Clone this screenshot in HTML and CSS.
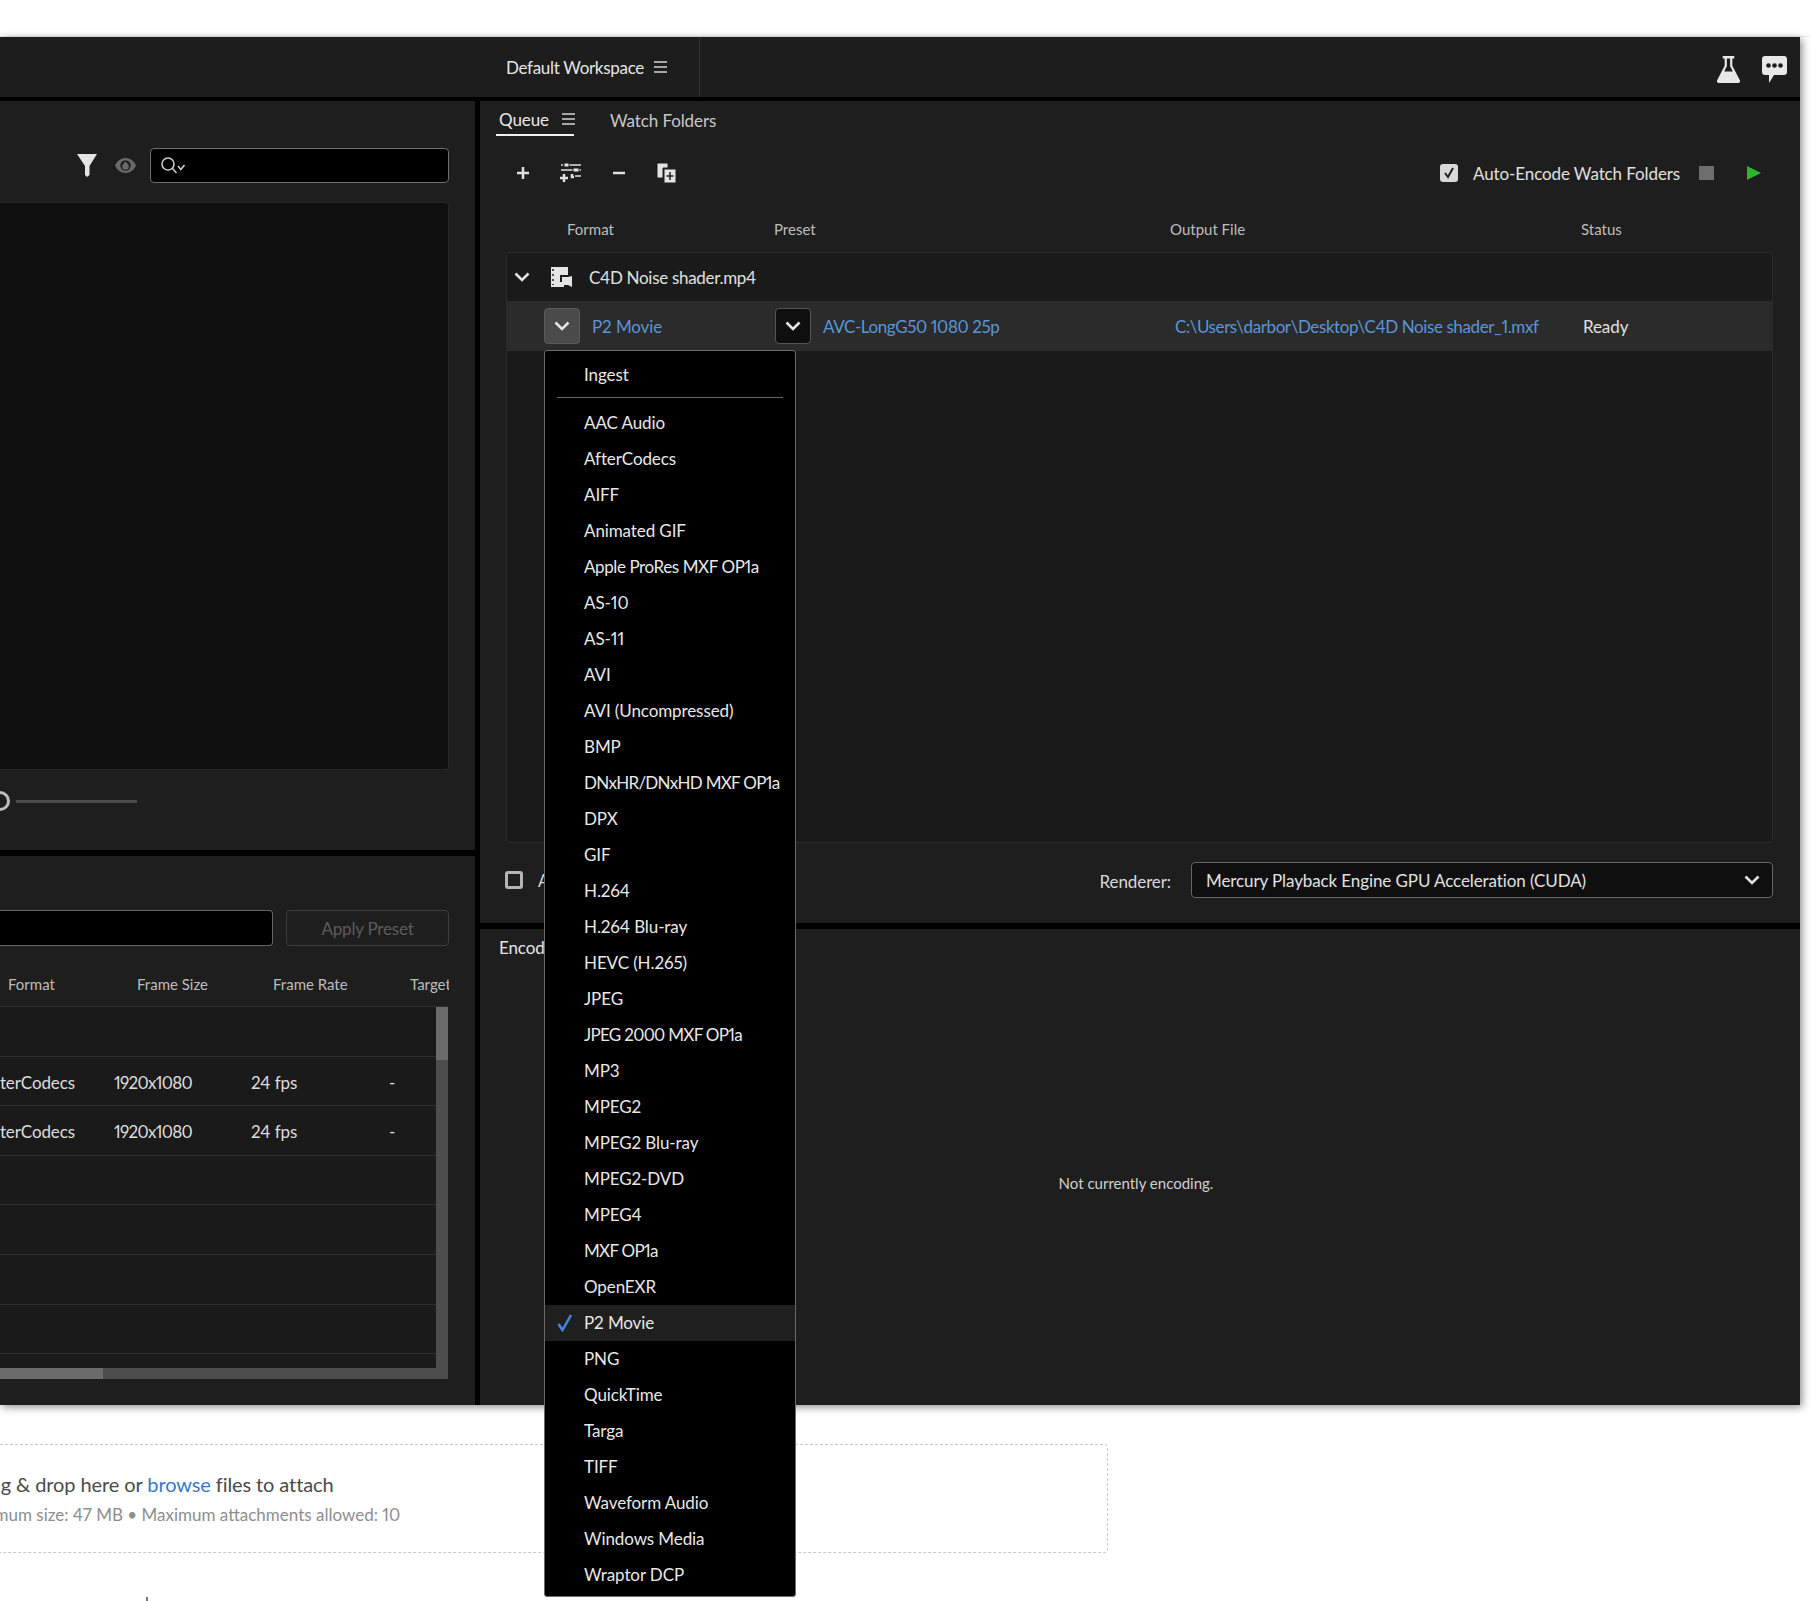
FILE: index.html
```html
<!DOCTYPE html>
<html lang="en">
<head>
  <meta charset="UTF-8" />
  <title>Media Encoder Queue</title>
  <link rel="stylesheet" href="styles.css">
</head>
<body>
  <div class="top-strip"></div>

  <div class="window">
    <div class="appbar">
      <div class="workspace">
        <span class="workspace-name">Default Workspace</span>
        <svg class="menu-icon" viewBox="0 0 13 12"><path d="M0 1h13M0 6h13M0 11h13" /></svg>
      </div>
      <div class="appbar-icons">
        <svg class="flask" viewBox="0 0 24 28"><path d="M6 0h12v2.500h-2V10l8 15.500c.6 1.300-.2 2.500-1.600 2.500H1.600C.2 28-.6 26.800 0 25.500L8 10V2.500H6z M10.300 2.500v8L7.500 16h9l-2.800-5.500v-8z" fill-rule="evenodd" /></svg>
        <svg class="chat" viewBox="0 0 25 27"><path d="M3 0h19c1.700 0 3 1.300 3 3v13c0 1.700-1.300 3-3 3H12l-5 8v-8H3c-1.700 0-3-1.300-3-3V3c0-1.700 1.300-3 3-3z" /><circle cx="6.500" cy="9.500" r="2.300" fill="#1d1d1d" /><circle cx="12.500" cy="9.500" r="2.300" fill="#1d1d1d" /><circle cx="18.500" cy="9.500" r="2.300" fill="#1d1d1d" /></svg>
      </div>
    </div>

    <div class="panels">
      <div class="col-left">
        <section class="panel browser">
          <div class="browser-tools">
            <svg class="filter" viewBox="0 0 20 23"><path d="M0 0h20L12.500 12v9L10 23 8 21V12z" /></svg>
            <svg class="eye" viewBox="0 0 21 15"><path d="M10.500 0C16 0 19.500 4 21 7.500 19.500 11 16 15 10.500 15S1.500 11 0 7.500C1.500 4 5 0 10.500 0z" /><circle cx="10.500" cy="7.500" r="5.200" fill="#1e1e1e" /><path d="M10.500 3.500c2 2.300 3.300 3.700 3.300 5a3.300 3.300 0 0 1-6.600 0c0-1.300 1.300-2.700 3.300-5z" /></svg>
            <div class="search-box">
              <svg class="search-icon" viewBox="0 0 24 17"><circle cx="7" cy="7" r="6" /><path d="M11.500 11.500l4 4.500M17 9l2.800 3.500L23.500 8" /></svg>
            </div>
          </div>
          <div class="browser-list"></div>
          <div class="zoom-slider">
            <span class="slider-knob"></span>
            <span class="slider-line"></span>
          </div>
        </section>

        <section class="panel presets">
          <div class="preset-tools">
            <div class="preset-input"></div>
            <button class="apply-btn">Apply Preset</button>
          </div>
          <div class="preset-head">
            <span>Format</span>
            <span>Frame Size</span>
            <span>Frame Rate</span>
            <span>Target Rate</span>
          </div>
          <div class="preset-table">
            <div class="preset-rows">
              <div class="preset-row"></div>
              <div class="preset-row">
                <span class="cell-format">AfterCodecs</span><span class="cell-size">1920x1080</span><span>24 fps</span><span>-</span>
              </div>
              <div class="preset-row">
                <span class="cell-format">AfterCodecs</span><span class="cell-size">1920x1080</span><span>24 fps</span><span>-</span>
              </div>
              <div class="preset-row"></div>
              <div class="preset-row"></div>
              <div class="preset-row"></div>
              <div class="preset-row"></div>
              <div class="preset-row"></div>
            </div>
            <div class="vscroll"><div class="vthumb"></div></div>
            <div class="hscroll"><div class="hthumb"></div></div>
          </div>
        </section>
      </div>

      <div class="col-right">
        <section class="panel queue">
          <div class="tabs">
            <div class="tab active">
              <span>Queue</span>
              <svg class="menu-icon" viewBox="0 0 13 12"><path d="M0 1h13M0 6h13M0 11h13" /></svg>
            </div>
            <div class="tab">Watch Folders</div>
          </div>

          <div class="queue-tools">
            <div class="tool-icons">
              <span class="tool"><svg viewBox="0 0 22 20"><path d="M11 4v12M5 10h12" class="thick" /></svg></span>
              <span class="tool"><svg viewBox="0 0 22 20"><path d="M9 2h12M1 2h2M1 7h14M19 7h2M15 13h6" /><rect x="4" y="0" width="5" height="4" class="fill" /><rect x="13" y="5" width="6" height="4" class="fill" /><path d="M12 11v3h2M4 11v8M0 15h8" class="thick" /></svg></span>
              <span class="tool"><svg viewBox="0 0 22 20"><path d="M5 10h12" class="thick" /></svg></span>
              <span class="tool"><svg viewBox="0 0 20 20"><path d="M0 0h11v5H6v10H0z" class="fill" /><rect x="7" y="6" width="12" height="14" class="fill" /><path d="M13 9v8M9.500 13h7" class="dark-line" /></svg></span>
            </div>
            <div class="encode-controls">
              <span class="check checked">
                <svg viewBox="0 0 18 18"><path d="M5 9l3 4 5-9" /></svg>
              </span>
              <span class="encode-label">Auto-Encode Watch Folders</span>
              <span class="stop-btn"></span>
              <svg class="play-btn" viewBox="0 0 14 14"><path d="M0 0l14 7-14 7z" /></svg>
            </div>
          </div>

          <div class="queue-head">
            <span>Format</span>
            <span>Preset</span>
            <span>Output File</span>
            <span>Status</span>
          </div>

          <div class="queue-list">
            <div class="source-row">
              <svg class="chevron source-chevron" viewBox="0 0 16 10"><path d="M1.500 1.500L8 8l6.500-6.500" /></svg>
              <svg class="file-icon" viewBox="0 0 21 20"><path d="M0 0h17v8H9v7h4v5H0z" /><path d="M2 2v2M2 7v2M2 12v2M2 17v1" class="dark-line" /><path d="M11 10h6l4-1v11l-4-2h-6z" /></svg>
              <span class="source-name">C4D Noise shader.mp4</span>
            </div>
            <div class="output-row">
              <span class="drop-btn open"><svg class="chevron" viewBox="0 0 16 10"><path d="M1.500 1.500L8 8l6.500-6.500" /></svg></span>
              <span class="link format-link">P2 Movie</span>
              <span class="drop-btn"><svg class="chevron" viewBox="0 0 16 10"><path d="M1.500 1.500L8 8l6.500-6.500" /></svg></span>
              <span class="link preset-link">AVC-LongG50 1080 25p</span>
              <span class="link output-link">C:\Users\darbor\Desktop\C4D Noise shader_1.mxf</span>
              <span>Ready</span>
            </div>
          </div>

          <div class="queue-foot">
            <span class="check"></span>
            <span class="autostart">Auto-Start Queue</span>
            <span class="renderer-label">Renderer:</span>
            <div class="renderer-select">
              <span>Mercury Playback Engine GPU Acceleration (CUDA)</span>
              <svg class="chevron" viewBox="0 0 16 10"><path d="M1.500 1.500L8 8l6.500-6.500" /></svg>
            </div>
          </div>
        </section>

        <section class="panel encoding">
          <div class="encoding-title">Encoding</div>
          <div class="encoding-body">Not currently encoding.</div>
        </section>
      </div>
    </div>
  </div>

  <div class="attach">
    <div class="attach-main">Drag &amp; drop here or <a class="browse">browse</a> files to attach</div>
    <div class="attach-sub">Maximum size: 47 MB &bull; Maximum attachments allowed: 10</div>
  </div>
  <div class="page-tick"></div>

  <ul class="format-menu">
    <li>Ingest</li>
    <li class="sep"></li>
    <li>AAC Audio</li>
    <li>AfterCodecs</li>
    <li>AIFF</li>
    <li>Animated GIF</li>
    <li class="snug">Apple ProRes MXF OP1a</li>
    <li>AS-10</li>
    <li>AS-11</li>
    <li>AVI</li>
    <li>AVI (Uncompressed)</li>
    <li>BMP</li>
    <li class="tight">DNxHR/DNxHD MXF OP1a</li>
    <li>DPX</li>
    <li>GIF</li>
    <li>H.264</li>
    <li>H.264 Blu-ray</li>
    <li>HEVC (H.265)</li>
    <li>JPEG</li>
    <li class="tight">JPEG 2000 MXF OP1a</li>
    <li>MP3</li>
    <li>MPEG2</li>
    <li>MPEG2 Blu-ray</li>
    <li>MPEG2-DVD</li>
    <li>MPEG4</li>
    <li class="tight">MXF OP1a</li>
    <li>OpenEXR</li>
    <li class="selected">
      <svg class="tick" viewBox="0 0 16 18"><path d="M1.500 10l4 6L14 1" /></svg>
      P2 Movie
    </li>
    <li>PNG</li>
    <li>QuickTime</li>
    <li>Targa</li>
    <li>TIFF</li>
    <li>Waveform Audio</li>
    <li>Windows Media</li>
    <li>Wraptor DCP</li>
  </ul>
</body>
</html>
```

FILE: styles.css
```css
html, body {
  margin: 0;
  height: 1601px;
  overflow: hidden;
}
body {
  position: relative;
  background: #fff;
  font-family: 'Lato', 'Open Sans', sans-serif;
  font-size: 17px;
  font-variant-numeric: proportional-nums;
  letter-spacing: -0.1px;
  color: #dcdcdc;
}
svg {
  display: block;
  flex: none;
}
.top-strip {
  height: 37px;
  box-sizing: border-box;
  border-bottom: 1px solid #ececec;
}
.window {
  width: 1800px;
  height: 1368px;
  background: #000;
  display: flex;
  flex-direction: column;
  gap: 4px;
  box-shadow: 2px 2px 8px rgba(0, 0, 0, 0.45);
}
.appbar {
  height: 60px;
  background: #1d1d1d;
  display: flex;
  justify-content: space-between;
}
.workspace {
  width: 700px;
  box-sizing: border-box;
  border-right: 1px solid #333;
  padding-right: 32px;
  display: flex;
  justify-content: flex-end;
  align-items: center;
  gap: 10px;
  color: #e6e6e6;
}
.workspace-name {
  letter-spacing: -0.3px;
}
.menu-icon {
  width: 13px;
  height: 12px;
}
.menu-icon path {
  stroke: #d5d5d5;
  stroke-width: 1.6;
  fill: none;
}
.appbar-icons {
  display: flex;
  align-items: center;
  gap: 22px;
  padding-right: 13px;
  margin-top: 5px;
}
.flask {
  width: 23px;
  height: 27px;
  fill: #e8e8e8;
}
.chat {
  width: 25px;
  height: 27px;
  fill: #e8e8e8;
}
.panels {
  flex: 1;
  display: flex;
  gap: 5px;
  min-height: 0;
}
.col-left {
  width: 475px;
  display: flex;
  flex-direction: column;
  gap: 6px;
}
.col-right {
  flex: 1;
  display: flex;
  flex-direction: column;
  gap: 6px;
}
.panel {
  background: #1e1e1e;
}

/* left top */
.browser {
  height: 749px;
  width: 449px;
  padding-right: 26px;
}
.browser-tools {
  padding-top: 47px;
  height: 35px;
  display: flex;
  justify-content: flex-end;
  align-items: center;
}
.filter {
  width: 20px;
  height: 23px;
  fill: #e4e4e4;
  margin-right: 18px;
}
.eye {
  width: 21px;
  height: 15px;
  fill: #6a6a6a;
  margin-right: 14px;
}
.search-box {
  width: 299px;
  height: 35px;
  box-sizing: border-box;
  background: #000;
  border: 1px solid #6e6e6e;
  border-radius: 4px;
  display: flex;
  align-items: center;
  padding-left: 10px;
}
.search-icon {
  width: 24px;
  height: 17px;
  fill: none;
  stroke: #c8c8c8;
  stroke-width: 1.6;
}
.browser-list {
  margin-top: 19px;
  height: 568px;
  box-sizing: border-box;
  background: #0f0f0f;
  border: 1px solid #262626;
  border-left: 0;
  border-radius: 0 4px 4px 0;
}
.zoom-slider {
  margin-top: 21px;
  display: flex;
  align-items: center;
  gap: 6px;
}
.slider-knob {
  width: 20px;
  height: 20px;
  box-sizing: border-box;
  border: 3px solid #bdbdbd;
  border-radius: 50%;
  margin-left: -10px;
}
.slider-line {
  width: 121px;
  height: 3px;
  background: #4a4a4a;
}

/* left bottom */
.presets {
  flex: 1;
  padding-top: 54px;
}
.preset-tools {
  width: 449px;
  display: flex;
  gap: 13px;
}
.preset-input {
  flex: 1;
  height: 36px;
  box-sizing: border-box;
  background: #000;
  border: 1px solid #666;
  border-left: 0;
  border-radius: 0 4px 4px 0;
}
.apply-btn {
  width: 163px;
  height: 36px;
  background: transparent;
  border: 1px solid #3d3d3d;
  border-radius: 4px;
  color: #5c5c5c;
  font: inherit;
  letter-spacing: -0.2px;
}
.preset-head {
  width: 449px;
  overflow: hidden;
  white-space: nowrap;
  display: grid;
  grid-template-columns: 129px 136px 137px 47px;
  padding-left: 8px;
  box-sizing: border-box;
  margin-top: 27px;
  height: 33px;
  line-height: 22px;
  font-size: 15px;
  letter-spacing: 0;
  color: #bdbdbd;
}
.preset-table {
  width: 448px;
  height: 372px;
  display: grid;
  grid-template-columns: 436px 12px;
  grid-template-rows: 361px 11px;
  border-top: 1px solid #2f2f2f;
  box-sizing: border-box;
}
.preset-rows {
  overflow: hidden;
  background: #1a1a1a;
}
.preset-row {
  height: 49.6px;
  box-sizing: border-box;
  border-bottom: 1px solid #2e2e2e;
  display: grid;
  grid-template-columns: 114px 137px 138px 1fr;
  align-items: center;
  white-space: nowrap;
  padding-top: 3px;
  color: #dedede;
}
.cell-format {
  justify-self: end;
  padding-right: 39px;
}
.cell-size {
  letter-spacing: -0.7px;
}
.vscroll {
  grid-row: 1 / 3;
  grid-column: 2;
  background: #4d4d4d;
}
.vthumb {
  height: 53px;
  background: #6b6b6b;
}
.hscroll {
  background: #4d4d4d;
}
.hthumb {
  width: 103px;
  height: 100%;
  background: #6b6b6b;
}

/* queue */
.queue {
  height: 822px;
  display: flex;
  flex-direction: column;
}
.tabs {
  height: 35px;
  display: flex;
  gap: 33px;
  padding-left: 16px;
}
.tab {
  display: flex;
  align-items: center;
  gap: 13px;
  padding: 3px 0 0 3px;
  color: #c8c8c8;
  box-sizing: border-box;
}
.tab.active {
  width: 78px;
  border-bottom: 2px solid #f0f0f0;
  color: #e8e8e8;
}
.queue-tools {
  margin-top: 19px;
  height: 36px;
  display: flex;
  justify-content: space-between;
  align-items: center;
  padding: 0 39px 0 19px;
}
.tool-icons {
  display: flex;
}
.tool {
  width: 48px;
  display: flex;
  justify-content: center;
}
.tool svg {
  height: 20px;
  width: 22px;
  fill: none;
  stroke: #e0e0e0;
  stroke-width: 1.4;
}
.tool .thick {
  stroke-width: 2.5;
}
.tool .fill {
  fill: #e4e4e4;
  stroke: #1e1e1e;
  stroke-width: 1;
}
.dark-line {
  stroke: #1e1e1e;
  stroke-width: 1.5;
  fill: none;
}
.encode-controls {
  display: flex;
  align-items: center;
}
.check {
  width: 18px;
  height: 18px;
  box-sizing: border-box;
  border: 3px solid #b5b5b5;
  border-radius: 3px;
  display: block;
}
.check.checked {
  background: #d8d8d8;
  border: 0;
}
.check svg {
  width: 18px;
  height: 18px;
  fill: none;
  stroke: #1e1e1e;
  stroke-width: 2;
}
.encode-label {
  margin-left: 15px;
  width: 206px;
  white-space: nowrap;
  color: #e0e0e0;
}
.stop-btn {
  margin-left: 20px;
  width: 15px;
  height: 14px;
  background: #6e6e6e;
}
.play-btn {
  margin-left: 33px;
  width: 14px;
  height: 14px;
  fill: #2fb52f;
}
.queue-head {
  margin-top: 27px;
  height: 34px;
  line-height: 22px;
  font-size: 15px;
  letter-spacing: 0;
  color: #bdbdbd;
  display: grid;
  grid-template-columns: 207px 396px 411px 1fr;
  padding-left: 87px;
}
.queue-list {
  margin: 0 27px 0 26px;
  height: 591px;
  box-sizing: border-box;
  background: #1a1a1a;
  border: 1px solid #2c2c2c;
  border-radius: 4px;
}
.source-row {
  height: 48px;
  display: flex;
  align-items: center;
  padding-left: 7px;
  color: #e0e0e0;
}
.source-name {
  letter-spacing: -0.3px;
}
.chevron {
  width: 16px;
  height: 10px;
  fill: none;
  stroke: #e4e4e4;
  stroke-width: 2.6;
}
.source-chevron {
  margin-right: 21px;
}
.file-icon {
  width: 21px;
  height: 20px;
  fill: #e4e4e4;
  margin-right: 17px;
}
.output-row {
  height: 50px;
  background: #2b2b2b;
  display: flex;
  align-items: center;
  padding-left: 37px;
  color: #e0e0e0;
}
.drop-btn {
  width: 36px;
  height: 36px;
  box-sizing: border-box;
  background: #0f0f0f;
  border: 1px solid #555;
  border-radius: 4px;
  display: flex;
  align-items: center;
  justify-content: center;
  flex: none;
}
.drop-btn.open {
  background: #4b4b4b;
  border-color: #5a5a5a;
}
.link {
  color: #5a96d8;
  white-space: nowrap;
}
.format-link {
  margin-left: 12px;
  width: 183px;
}
.preset-link {
  margin-left: 12px;
  width: 352px;
  letter-spacing: -0.4px;
}
.output-link {
  width: 408px;
  letter-spacing: -0.4px;
}
.queue-foot {
  flex: 1;
  display: flex;
  align-items: center;
  padding: 0 27px 6px 25px;
}
.autostart {
  margin-left: 15px;
  color: #dcdcdc;
}
.renderer-label {
  margin-left: auto;
  margin-right: 20px;
  margin-top: 3px;
  color: #d8d8d8;
}
.renderer-select {
  width: 582px;
  height: 36px;
  box-sizing: border-box;
  background: #0f0f0f;
  border: 1px solid #666;
  border-radius: 4px;
  display: flex;
  justify-content: space-between;
  align-items: center;
  padding: 0 12px 0 14px;
  color: #e2e2e2;
}

/* encoding */
.encoding {
  flex: 1;
  display: flex;
  flex-direction: column;
}
.encoding-title {
  height: 32px;
  padding: 8px 0 0 19px;
  box-sizing: border-box;
  line-height: 22px;
  color: #e6e6e6;
}
.encoding-body {
  flex: 1;
  display: flex;
  align-items: center;
  justify-content: center;
  padding-right: 8px;
  font-size: 15px;
  letter-spacing: 0;
  color: #d0d0d0;
}

/* page below the window */
.attach {
  margin-top: 39px;
  width: 1108px;
  height: 109px;
  box-sizing: border-box;
  border: 1px dashed #c8c8c8;
  border-left: 0;
  border-radius: 0 4px 4px 0;
  padding-top: 24px;
  white-space: nowrap;
  overflow: hidden;
}
.attach-main {
  margin-left: -31px;
  font-size: 20px;
  line-height: 30px;
  color: #4a4a4a;
}
.browse {
  color: #3b78c9;
}
.attach-sub {
  margin-left: -42px;
  margin-top: 1px;
  font-size: 17px;
  letter-spacing: 0;
  line-height: 30px;
  color: #8e8e8e;
}
.page-tick {
  position: absolute;
  left: 146px;
  top: 1597px;
  width: 2px;
  height: 4px;
  background: #777;
}

/* dropdown over the queue */
.format-menu {
  position: absolute;
  left: 544px;
  top: 350px;
  width: 252px;
  height: 1247px;
  box-sizing: border-box;
  margin: 0;
  padding: 6px 0 0;
  list-style: none;
  background: #000;
  border: 1px solid #6a6a6a;
  border-radius: 3px;
  color: #e8e8e8;
}
.format-menu li {
  position: relative;
  height: 36px;
  line-height: 36px;
  padding-left: 39px;
  white-space: nowrap;
}
.format-menu .tight {
  letter-spacing: -0.7px;
}
.format-menu .snug {
  letter-spacing: -0.4px;
}
.format-menu .sep {
  height: 12px;
  box-sizing: border-box;
  padding: 4px 12px 0;
}
.format-menu .sep::before {
  content: "";
  display: block;
  height: 1px;
  background: #666;
}
.format-menu .selected {
  background: #1f1f1f;
}
.tick {
  position: absolute;
  left: 12px;
  top: 9px;
  width: 16px;
  height: 18px;
  fill: none;
  stroke: #3f8ae0;
  stroke-width: 2.5;
}
```
